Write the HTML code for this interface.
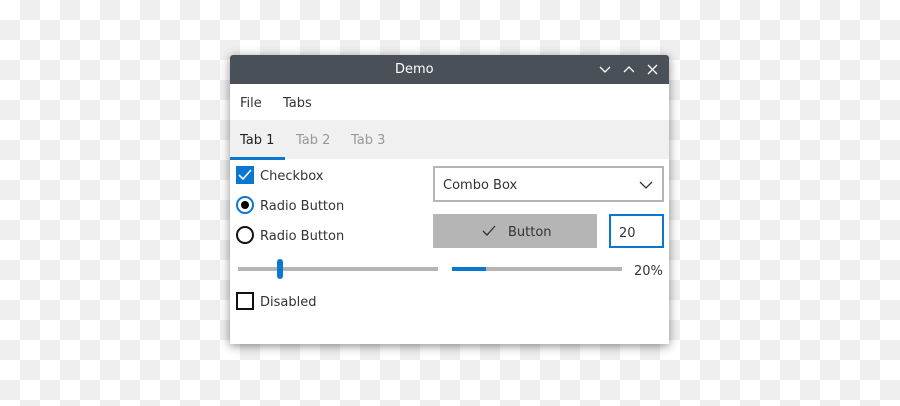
<!DOCTYPE html>
<html><head><style>
html,body{margin:0;padding:0}
body{width:900px;height:406px;position:relative;overflow:hidden;background:#fff;font-family:"DejaVu Sans","Liberation Sans",sans-serif;font-size:13px;color:#333}
.ck{position:absolute;left:0;top:0;width:900px;height:406px}
.win{position:absolute;left:230px;top:55px;width:439px;height:289px;background:#fff;box-shadow:0 2px 10px rgba(0,0,0,.45);border-radius:3px 3px 0 0;overflow:hidden}
.tb{height:29px;background:#4a5058;color:#fff;line-height:30px;font-size:13px;position:relative}
.a{position:absolute}
</style></head><body>
<svg class="ck" width="900" height="406"><defs><pattern id="p" width="40" height="40" patternUnits="userSpaceOnUse"><rect width="40" height="40" fill="#fff"/><rect x="20" width="20" height="20" fill="#efefef"/><rect y="20" width="20" height="20" fill="#efefef"/></pattern></defs><rect width="900" height="406" fill="url(#p)"/></svg>
<div class="win">
<div class="tb"><span class="a" style="left:165px">Demo</span>
<svg class="a" style="left:368px;top:8px" width="66" height="14" fill="none" stroke="#fff" stroke-width="1.3"><path d="M2 4l5 5 5-5"/><path d="M26 9l5-5 5 5"/><path d="M50 2l9 9M59 2l-9 9"/></svg></div>
<div class="a" style="top:31px;left:0;width:439px;height:36px;line-height:36px"><span class="a" style="left:10px">File</span><span class="a" style="left:53px">Tabs</span></div>
<div class="a" style="top:65px;left:0;width:439px;height:39px;background:#f0f0f0;line-height:42px">
<span class="a" style="left:10px;color:#222">Tab 1</span><span class="a" style="left:66px;color:#999">Tab 2</span><span class="a" style="left:121px;color:#999">Tab 3</span>
<div class="a" style="left:0;top:37px;width:55px;height:3px;background:#0a78d0"></div></div>
<div class="a" style="left:6px;top:111px;width:18px;height:18px;background:#0a78d0"><svg width="18" height="18"><path d="M3 9l4 4 8-9" fill="none" stroke="#fff" stroke-width="1.6"/></svg></div>
<span class="a" style="left:30px;top:114px">Checkbox</span>
<div class="a" style="left:6px;top:141px;width:14px;height:14px;border:2px solid #0a78d0;border-radius:50%"><div class="a" style="left:3px;top:3px;width:8px;height:8px;border-radius:50%;background:#000"></div></div>
<span class="a" style="left:30px;top:144px">Radio Button</span>
<div class="a" style="left:6px;top:171px;width:14px;height:14px;border:2px solid #111;border-radius:50%"></div>
<span class="a" style="left:30px;top:174px">Radio Button</span>
<div class="a" style="left:203px;top:111px;width:227px;height:32px;border:2px solid #b5b5b5"><span class="a" style="left:8px;top:10px">Combo Box</span>
<svg class="a" style="left:204px;top:12px" width="14" height="10"><path d="M1 2l6 6 6-6" fill="none" stroke="#333" stroke-width="1.3"/></svg></div>
<div class="a" style="left:203px;top:159px;width:164px;height:34px;background:#b5b5b5"><svg class="a" style="left:48px;top:10px" width="16" height="14"><path d="M2 7l4 4 8-9" fill="none" stroke="#333" stroke-width="1.3"/></svg><span class="a" style="left:75px;top:11px">Button</span></div>
<div class="a" style="left:379px;top:159px;width:51px;height:30px;border:2px solid #0a78d0"><span class="a" style="left:8px;top:10px">20</span></div>
<div class="a" style="left:8px;top:212px;width:200px;height:4px;background:#b5b5b5"></div>
<div class="a" style="left:47px;top:204px;width:6px;height:20px;border-radius:3px;background:#0a78d0"></div>
<div class="a" style="left:222px;top:212px;width:170px;height:4px;background:#b5b5b5"></div>
<div class="a" style="left:222px;top:212px;width:34px;height:4px;background:#0a78d0"></div>
<span class="a" style="left:404px;top:209px">20%</span>
<div class="a" style="left:6px;top:237px;width:14px;height:14px;border:2px solid #111"></div>
<span class="a" style="left:30px;top:240px">Disabled</span>
</div>
</body></html>
